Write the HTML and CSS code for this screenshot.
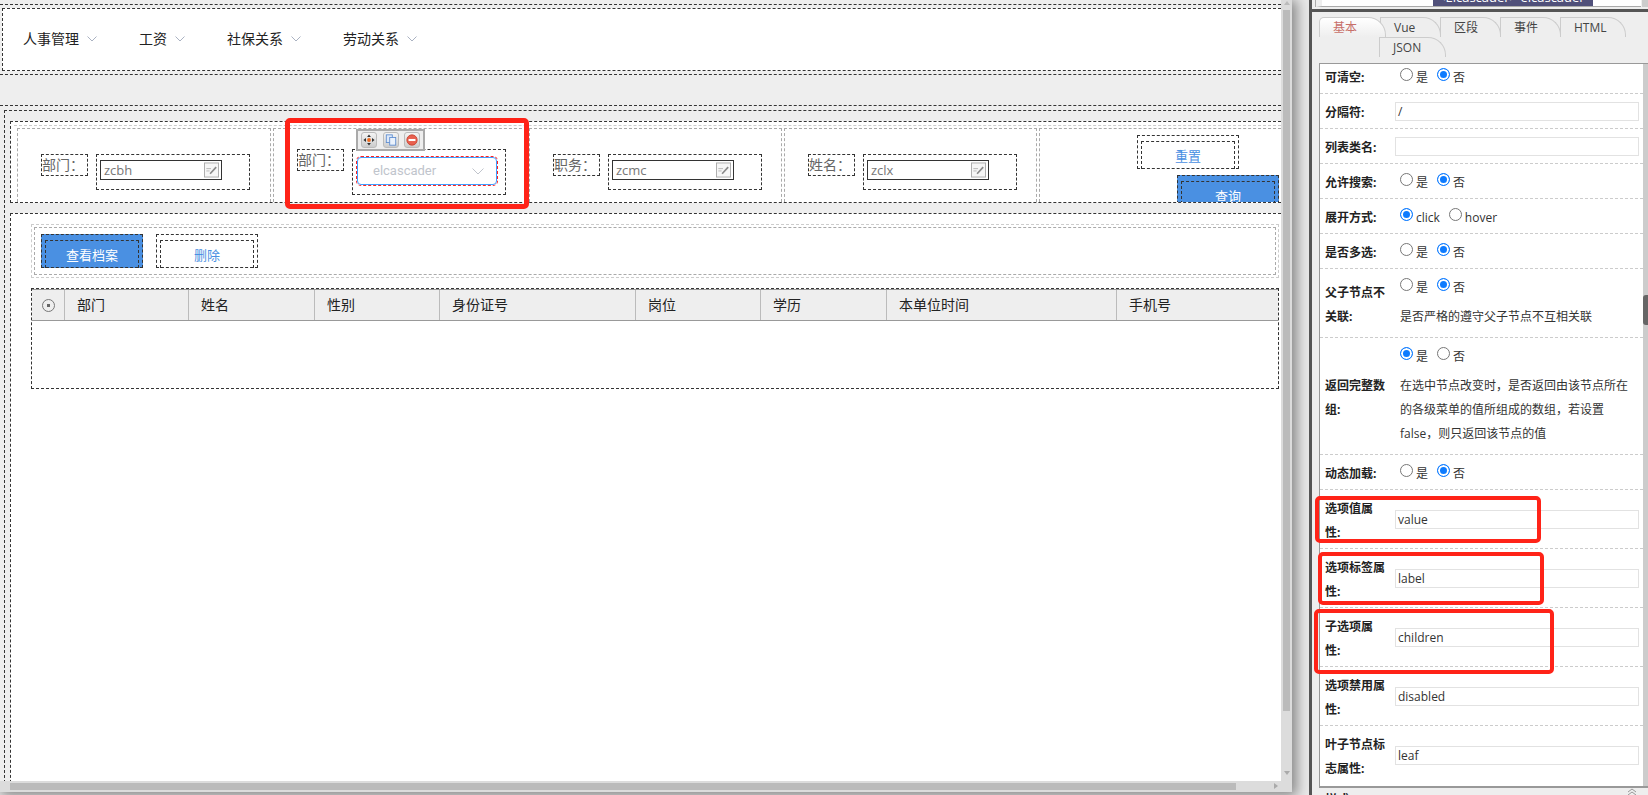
FILE: index.html
```html
<!DOCTYPE html>
<html lang="zh-CN">
<head>
<meta charset="utf-8">
<title>表单设计器</title>
<link rel="stylesheet" href="styles.css">
</head>
<body>
<div class="app">
  <div class="stage">
    <div class="frame">
      <div class="viewport">
        <div class="shell">
          <nav class="nav">
            <div class="menu"><span>人事管理</span><svg class="chev" viewBox="0 0 10 6"><path d="M.5.5 5 5 9.500.5"/></svg></div>
            <div class="menu"><span>工资</span><svg class="chev" viewBox="0 0 10 6"><path d="M.5.5 5 5 9.500.5"/></svg></div>
            <div class="menu"><span>社保关系</span><svg class="chev" viewBox="0 0 10 6"><path d="M.5.5 5 5 9.500.5"/></svg></div>
            <div class="menu"><span>劳动关系</span><svg class="chev" viewBox="0 0 10 6"><path d="M.5.5 5 5 9.500.5"/></svg></div>
          </nav>
        </div>
        <section class="section">
          <div class="outer">
            <div class="form">
              <div class="form-row">
                <div class="cell">
                  <div class="lbl">部门：</div>
                  <div class="wrap">
                    <div class="input"><span>zcbh</span><svg class="edit" viewBox="0 0 16 16"><rect x=".5" y=".5" width="15" height="15" fill="#f6f6f6" stroke="#aaa"/><path d="M2.500 6.500h5M2.500 9h3.500" stroke="#b5b5b5" fill="none"/><path d="M6.500 12 13 5" stroke="#8a8a8a" stroke-width="1.800" fill="none"/></svg></div>
                  </div>
                </div>
                <div class="cell cell-selected">
                  <div class="lbl">部门：</div>
                  <div class="wrap wrap-selected">
                    <div class="cascader"><span>elcascader</span><svg class="chev-lg" viewBox="0 0 12 7"><path d="M.5.5 6 6 11.500.5"/></svg></div>
                  </div>
                  <div class="tools">
                    <span class="tool"><svg viewBox="0 0 14 14"><path d="M7 .5 9.200 3.500H4.800zM7 13.500 4.800 10.500h4.400zM.5 7l3-2.200v4.400zM13.500 7l-3 2.200V4.800z" fill="#333"/><circle cx="7" cy="7" r="2.200" fill="#f06a1d"/></svg></span>
                    <span class="tool"><svg viewBox="0 0 14 14"><rect x="1.500" y="1" width="7" height="9" fill="#dce8f8" stroke="#5b8bd0"/><rect x="5.500" y="4" width="7" height="9" fill="#eaf2fc" stroke="#5b8bd0"/></svg></span>
                    <span class="tool"><svg viewBox="0 0 14 14"><circle cx="7" cy="7" r="6" fill="#e8604f" stroke="#c8422f"/><rect x="3" y="5.800" width="8" height="2.400" fill="#fff"/></svg></span>
                  </div>
                </div>
                <div class="cell">
                  <div class="lbl">职务：</div>
                  <div class="wrap">
                    <div class="input"><span>zcmc</span><svg class="edit" viewBox="0 0 16 16"><rect x=".5" y=".5" width="15" height="15" fill="#f6f6f6" stroke="#aaa"/><path d="M2.500 6.500h5M2.500 9h3.500" stroke="#b5b5b5" fill="none"/><path d="M6.500 12 13 5" stroke="#8a8a8a" stroke-width="1.800" fill="none"/></svg></div>
                  </div>
                </div>
                <div class="cell">
                  <div class="lbl">姓名：</div>
                  <div class="wrap">
                    <div class="input"><span>zclx</span><svg class="edit" viewBox="0 0 16 16"><rect x=".5" y=".5" width="15" height="15" fill="#f6f6f6" stroke="#aaa"/><path d="M2.500 6.500h5M2.500 9h3.500" stroke="#b5b5b5" fill="none"/><path d="M6.500 12 13 5" stroke="#8a8a8a" stroke-width="1.800" fill="none"/></svg></div>
                  </div>
                </div>
                <div class="cell cell-actions">
                  <div class="btn btn-reset"><div class="btn-in">重置</div></div>
                  <div class="btn btn-primary btn-query"><div class="btn-in">查询</div></div>
                </div>
              </div>
            </div>
            <div class="panel">
              <div class="bar">
                <div class="bar-in">
                  <div class="btn btn-primary"><div class="btn-in">查看档案</div></div>
                  <div class="btn"><div class="btn-in">删除</div></div>
                </div>
              </div>
              <div class="table">
                <div class="thead">
                  <div class="th th-radio"><span class="dot-radio"></span></div>
                  <div class="th">部门</div>
                  <div class="th">姓名</div>
                  <div class="th">性别</div>
                  <div class="th">身份证号</div>
                  <div class="th">岗位</div>
                  <div class="th">学历</div>
                  <div class="th">本单位时间</div>
                  <div class="th">手机号</div>
                </div>
              </div>
            </div>
          </div>
        </section>
      </div>
      <div class="vbar">
        <span class="arrow-up"></span>
        <div class="vthumb"></div>
        <span class="arrow-down"></span>
      </div>
      <div class="hbar">
        <div class="hthumb"></div>
        <span class="arrow-right"></span>
      </div>
    </div>
  </div>
  <div class="splitter"></div>
  <aside class="inspector">
    <div class="tree">
      <div class="tree-in"><span class="tree-sel">&lt;Elcascader&gt; elcascader</span></div>
      <div class="tree-bar"></div>
    </div>
    <div class="tabs">
      <div class="tab-row">
        <div class="tab tab-active">基本</div>
        <div class="tab">Vue</div>
        <div class="tab">区段</div>
        <div class="tab">事件</div>
        <div class="tab tab-wide">HTML</div>
      </div>
      <div class="tab-row tab-row-2">
        <div class="tab tab-json">JSON</div>
      </div>
    </div>
    <div class="props">
      <div class="rows">
        <div class="row row-first">
          <div class="key">可清空:</div>
          <div class="radios"><span class="radio"></span><span class="rtxt">是</span><span class="radio on"></span><span class="rtxt">否</span></div>
        </div>
        <div class="row"><div class="key">分隔符:</div><div class="text-input">/</div></div>
        <div class="row"><div class="key">列表类名:</div><div class="text-input"></div></div>
        <div class="row">
          <div class="key">允许搜索:</div>
          <div class="radios"><span class="radio"></span><span class="rtxt">是</span><span class="radio on"></span><span class="rtxt">否</span></div>
        </div>
        <div class="row">
          <div class="key">展开方式:</div>
          <div class="radios"><span class="radio on"></span><span class="rtxt">click</span><span class="radio"></span><span class="rtxt">hover</span></div>
        </div>
        <div class="row">
          <div class="key">是否多选:</div>
          <div class="radios"><span class="radio"></span><span class="rtxt">是</span><span class="radio on"></span><span class="rtxt">否</span></div>
        </div>
        <div class="row">
          <div class="key">父子节点不关联:</div>
          <div class="stack">
            <div class="radios"><span class="radio"></span><span class="rtxt">是</span><span class="radio on"></span><span class="rtxt">否</span></div>
            <div class="desc">是否严格的遵守父子节点不互相关联</div>
          </div>
        </div>
        <div class="row">
          <div class="key">返回完整数组:</div>
          <div class="stack">
            <div class="radios"><span class="radio on"></span><span class="rtxt">是</span><span class="radio"></span><span class="rtxt">否</span></div>
            <div class="desc">在选中节点改变时，是否返回由该节点所在的各级菜单的值所组成的数组，若设置 false，则只返回该节点的值</div>
          </div>
        </div>
        <div class="row">
          <div class="key">动态加载:</div>
          <div class="radios"><span class="radio"></span><span class="rtxt">是</span><span class="radio on"></span><span class="rtxt">否</span></div>
        </div>
        <div class="row"><div class="key">选项值属性:</div><div class="text-input">value</div></div>
        <div class="row"><div class="key">选项标签属性:</div><div class="text-input">label</div></div>
        <div class="row"><div class="key">子选项属性:</div><div class="text-input">children</div></div>
        <div class="row"><div class="key">选项禁用属性:</div><div class="text-input">disabled</div></div>
        <div class="row"><div class="key">叶子节点标志属性:</div><div class="text-input">leaf</div></div>
      </div>
      <div class="pscroll"><div class="pthumb"></div></div>
    </div>
    <div class="next-head"><span>样式</span><svg class="collapse" viewBox="0 0 10 8"><path d="M1 4 5 1l4 3M1 7l4-3 4 3" fill="none" stroke="#999"/></svg></div>
  </aside>
</div>
<div class="mark mark-form"></div>
<div class="mark mark-value"></div>
<div class="mark mark-label"></div>
<div class="mark mark-children"></div>
</body>
</html>
```
FILE: styles.css
```css
* { box-sizing: border-box; }
html, body { margin: 0; height: 100%; overflow: hidden; }
body {
  position: relative;
  background: #e8e8e8;
  color: #333;
  font: 12px/24px "Open Sans", "Noto Sans CJK SC", sans-serif;
}
.app { display: flex; width: 1648px; height: 795px; }

/* left design surface */
.stage { width: 1309px; height: 795px; flex: none; background: #e9e9e9; }
.frame {
  width: 1292px;
  height: 792px;
  display: grid;
  grid-template-columns: 1281px 9px;
  grid-template-rows: 781px 9px;
  background: #dcdcdc;
  box-shadow: 3px 2px 12px 2px rgba(0, 0, 0, .42);
}
.viewport { overflow: hidden; background: #eee; }
.vbar { position: relative; padding-left: 2px; }
.vthumb { position: absolute; left: 2px; right: 0; top: 10px; height: 701px; background: #bbb; }
.arrow-up, .arrow-down, .arrow-right { position: absolute; width: 0; height: 0; border: 3px solid transparent; }
.arrow-up { top: 1px; left: 3px; border-top: 0; border-bottom: 4px solid #bbb; }
.arrow-down { top: 771px; left: 3px; border-bottom: 0; border-top: 4px solid #aaa; }
.hbar { position: relative; }
.hthumb { position: absolute; left: 10px; top: 2px; bottom: 0; width: 1226px; background: #bbb; }
.arrow-right { left: 1274px; top: 2px; border-right: 0; border-left: 4px solid #aaa; }

.shell {
  margin-top: 4px;
  padding: 3px 0;
  border-top: 1px dashed #333;
  border-bottom: 1px dashed #333;
}
.nav {
  height: 63px;
  margin-left: 2px;
  padding: 0 0 2px 20px;
  display: flex;
  align-items: center;
  gap: 42px;
  background: #fff;
  border: 1px dashed #333;
  border-right: 0;
  font-size: 14px;
  color: #222;
}
.menu { display: flex; align-items: center; gap: 8px; }
.chev { width: 10px; height: 6px; fill: none; stroke: #aab2c2; }
.section { margin-top: 30px; padding-top: 4px; border-top: 1px dashed #333; }
.outer {
  margin-left: 4px;
  padding: 10px 0 0 5px;
  border-top: 1px dashed #333;
  border-left: 1px dashed #333;
}
.form {
  height: 82px;
  padding: 3px 0 0 0;
  background: #fff;
  border: 1px dashed #333;
  border-right: 0;
  overflow: hidden;
}
.form-row {
  height: 100%;
  margin-left: 3px;
  padding: 2px 0 0 3px;
  display: grid;
  grid-template-columns: 254px 254px 253px 253px 1fr;
  column-gap: 2px;
  border-top: 1px dashed #ccc;
}
.cell {
  position: relative;
  padding: 25px 0 0 23px;
  display: flex;
  align-items: flex-start;
  gap: 8px;
  border: 1px dashed #aaa;
  border-bottom: 0;
}
.cell-selected { padding-top: 20px; }
.cell-actions {
  padding: 6px 0 0 0;
  display: block;
  border-right: 0;
  overflow: hidden;
}
.lbl {
  flex: none;
  width: 47px;
  height: 22px;
  line-height: 20px;
  border: 1px dashed #333;
  font-size: 14px;
  color: #666;
  white-space: nowrap;
}
.wrap {
  flex: none;
  width: 154px;
  height: 36px;
  padding: 5px 0 0 3px;
  border: 1px dashed #333;
}
.wrap-selected { height: 46px; padding: 7px 0 0 4px; }
.input {
  width: 122px;
  height: 20px;
  padding: 0 2px 0 3px;
  display: flex;
  align-items: center;
  justify-content: space-between;
  border: 1px solid #333;
  font-size: 13px;
  line-height: 18px;
  color: #777;
}
.edit { width: 15px; height: 16px; flex: none; }
.cascader {
  width: 140px;
  height: 28px;
  padding: 0 12px 0 15px;
  display: flex;
  align-items: center;
  justify-content: space-between;
  border: 1px solid #409eff;
  border-radius: 4px;
  outline: 1px dashed #f22;
  font: 13px/26px Roboto, sans-serif;
  color: #c0c4cc;
}
.chev-lg { width: 12px; height: 7px; fill: none; stroke: #c0c4cc; }
.tools {
  position: absolute;
  left: 82px;
  top: 0;
  width: 69px;
  height: 22px;
  padding: 1px 3px;
  display: flex;
  justify-content: space-between;
  background: #eee;
  border: 2px solid #aaa;
}
.tool {
  width: 16px;
  height: 16px;
  padding: 1px;
  display: block;
  background: linear-gradient(#f4f4f4, #ccc);
  border: 1px solid #bbb;
  border-radius: 3px;
}
.tool svg { display: block; width: 100%; height: 100%; }
.btn {
  width: 102px;
  height: 34px;
  padding: 5px 3px 0;
  flex: none;
  border: 1px dashed #333;
  font-size: 13px;
  color: #4a90e2;
  text-align: center;
}
.btn-in {
  height: 28px;
  line-height: 28px;
  border: 1px dashed #333;
  border-bottom: 0;
}
.btn-primary { background: #4a90e2; color: #fff; }
.btn-reset { margin-left: 97px; }
.btn-query { margin: 6px 0 0 137px; }

.panel {
  height: 600px;
  margin-top: 10px;
  padding: 10px 2px 0 20px;
  background: #fff;
  border-top: 1px dashed #333;
  border-left: 1px dashed #333;
}
.bar { height: 54px; padding: 2px; border: 1px dashed #ccc; }
.bar-in {
  height: 48px;
  padding: 6px 6px;
  display: flex;
  gap: 13px;
  border: 1px dashed #aaa;
}
.table { height: 101px; margin-top: 10px; border: 1px dashed #333; }
.thead {
  height: 32px;
  display: grid;
  grid-template-columns: 33px 124px 126px 125px 196px 125px 126px 230px 1fr;
  background: #eee;
  border-top: 1px solid #999;
  border-bottom: 1px solid #999;
  font-size: 14px;
  line-height: 30px;
  color: #222;
}
.th { padding-left: 12px; border-right: 1px solid #bbb; }
.th:last-child { border-right: 0; }
.th-radio { padding: 0; display: flex; align-items: center; justify-content: center; }
.dot-radio {
  width: 13px;
  height: 13px;
  border: 1px solid #777;
  border-radius: 50%;
  background: radial-gradient(circle, #666 0 1.500px, transparent 2px);
}

/* right inspector */
.splitter { width: 3px; flex: none; background: #555; }
.inspector {
  flex: 1;
  min-width: 0;
  height: 795px;
  display: flex;
  flex-direction: column;
  background: #eee;
}
.tree {
  height: 12px;
  flex: none;
  padding: 0 0 0 4px;
  display: flex;
  border-bottom: 3px solid #555;
}
.tree-in {
  flex: 1;
  height: 7px;
  padding-left: 111px;
  display: flex;
  align-items: flex-end;
  overflow: hidden;
  background: #fff;
  border-left: 6px solid #eee;
  border-bottom: 1px solid #aaa;
  box-shadow: -1px 0 0 #aaa;
}
.tree-sel {
  flex: none;
  width: 160px;
  height: 18px;
  padding-left: 5px;
  background: #50507a;
  color: #fff;
  font-size: 13px;
  line-height: 18px;
  white-space: nowrap;
}
.tree-bar { width: 6px; height: 7px; margin-left: 1px; background: #ccc; }
.tabs { flex: none; height: 51px; padding: 5px 0 0 7px; }
.tab-row { height: 20px; display: flex; }
.tab-row-2 { padding-left: 60px; }
.tab {
  width: 61px;
  height: 20px;
  margin-left: -1px;
  padding-left: 13px;
  line-height: 19px;
  border: 1px solid #ccc;
  border-bottom: 0;
  border-radius: 0 18px 0 0;
  color: #444;
  white-space: nowrap;
}
.tab-active {
  position: relative;
  width: 67px;
  margin: 0 -6px 0 0;
  background: linear-gradient(#fff, #eee);
  border-radius: 5px 18px 0 0;
  color: #c8706a;
}
.tab-active + .tab { margin-left: 0; }
.tab-wide { width: 66px; }
.tab-json { width: 67px; margin-left: 0; }
.props {
  flex: 1;
  min-height: 0;
  margin-left: 7px;
  display: flex;
  overflow: hidden;
  background: #fff;
  border-top: 1px solid #999;
  border-left: 1px solid #999;
}
.rows { flex: 1; min-width: 0; }
.row {
  padding: 5px 4px 5px 5px;
  display: flex;
  align-items: center;
  border-bottom: 1px dashed #ccc;
}
.row-first { margin-top: -5px; }
.row:last-child { border-bottom: 0; }
.key {
  flex: none;
  width: 62px;
  margin: 2px 8px -2px 0;
  font-weight: 700;
  color: #222;
}
.text-input {
  flex: 1;
  min-width: 0;
  height: 19px;
  padding-left: 2px;
  border: 1px solid #e2e2e2;
  line-height: 17px;
  color: #333;
}
.radios { height: 24px; padding-left: 5px; display: flex; align-items: center; color: #333; }
.radio {
  width: 13px;
  height: 13px;
  margin-right: 3px;
  margin-bottom: 3px;
  flex: none;
  border: 1px solid #777;
  border-radius: 50%;
  background: #fff;
}
.radio.on { background: #0d7bff; border-color: #0d7bff; box-shadow: inset 0 0 0 2px #fff; }
.rtxt { margin-top: 3px; margin-right: 9px; }
.stack { flex: 1; min-width: 0; }
.desc { max-width: 241px; padding: 7px 0 3px 5px; color: #333; }
.pscroll { width: 5px; flex: none; background: #ccc; }
.pthumb { width: 5px; height: 30px; margin-top: 231px; background: #666; border-radius: 3px 0 0 3px; }
.next-head {
  flex: none;
  height: 9px;
  margin-left: 7px;
  padding: 0 11px 0 6px;
  display: flex;
  justify-content: space-between;
  background: #eee;
  border-top: 2px solid #999;
  font-weight: 700;
  color: #222;
  overflow: hidden;
}
.collapse { width: 10px; height: 8px; flex: none; }

/* red review annotations */
.mark {
  position: absolute;
  border: 4px solid #ff2318;
  border-radius: 5px;
  pointer-events: none;
}
.mark-form { left: 285px; top: 118px; width: 244px; height: 91px; border-width: 5px; }
.mark-value { left: 1315px; top: 496px; width: 226px; height: 47px; }
.mark-label { left: 1318px; top: 552px; width: 226px; height: 53px; }
.mark-children { left: 1314px; top: 609px; width: 240px; height: 65px; }
```
